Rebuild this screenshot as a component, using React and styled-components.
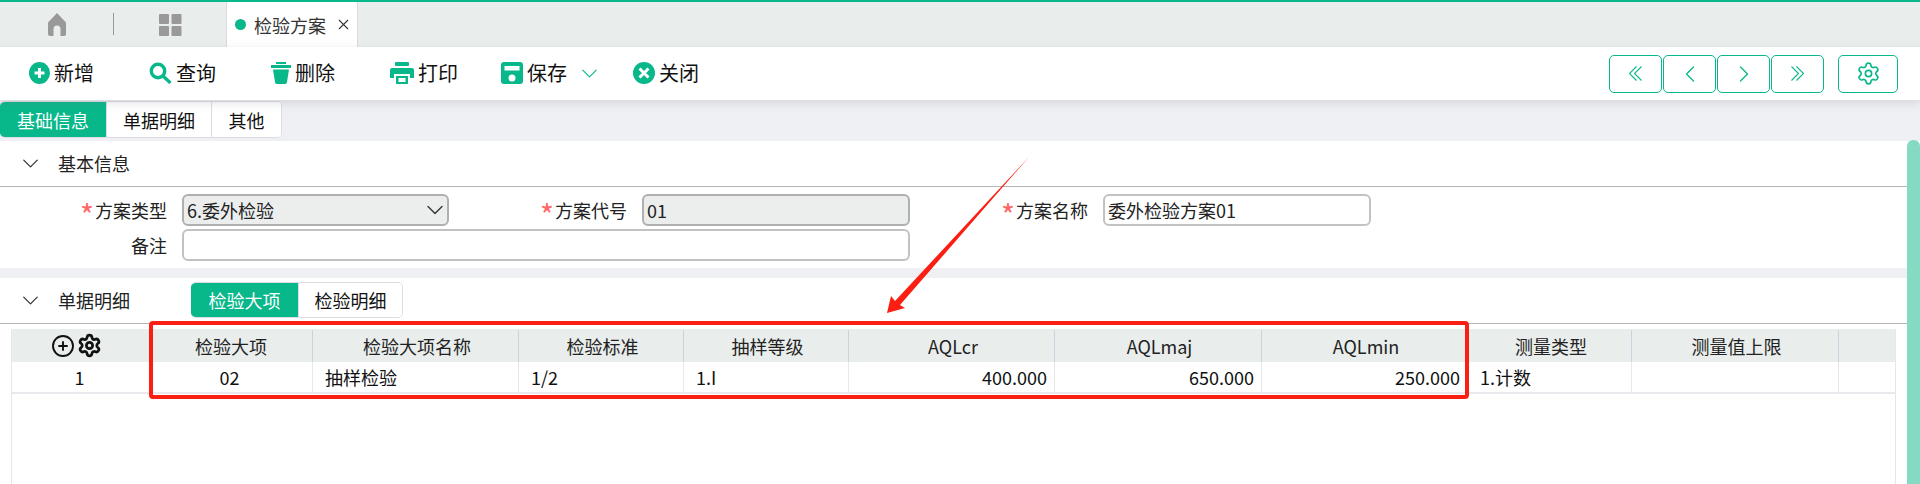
import styled, { createGlobalStyle } from 'styled-components';
import { ChevronDown, ChevronLeft, ChevronRight, CirclePlus, Settings, X } from 'lucide-react';

const GREEN = '#08b78a';
const FONT = '"Noto Sans CJK SC", "Noto Sans", sans-serif';

const GlobalStyle = createGlobalStyle`
  html, body {
    margin: 0;
    padding: 0;
    background: #fff;
  }
  * {
    box-sizing: border-box;
  }
`;

const Page = styled.div`
  position: relative;
  width: 1920px;
  height: 484px;
  overflow: hidden;
  background: #fff;
  color: #111;
  font-family: ${FONT};
  font-size: 18px;
`;

const TabBar = styled.div`
  display: flex;
  align-items: stretch;
  height: 47px;
  border-top: 2px solid ${GREEN};
  background: #e9edec;
`;

const TabIcon = styled.div`
  display: flex;
  align-items: center;
  justify-content: center;
  width: ${p => p.$w}px;
  color: #999;
`;

const TabDivider = styled.div`
  width: 1px;
  height: 22px;
  margin-top: 11px;
  background: #9a9a9a;
`;

const PageTab = styled.div`
  display: flex;
  align-items: center;
  width: 132px;
  padding-left: 8px;
  background: #fff;
  border: solid #d9dcdc;
  border-width: 0 1px;
  border-radius: 3px 3px 0 0;
  color: #333;
`;

const Dot = styled.span`
  width: 11px;
  height: 11px;
  margin-right: 8px;
  border-radius: 50%;
  background: ${GREEN};
`;

const TabClose = styled(X)`
  margin-left: 9px;
  color: #333;
`;

const Toolbar = styled.div`
  position: relative;
  display: flex;
  align-items: center;
  height: 53px;
  padding-left: 29px;
  background: #fff;
  box-shadow: 0 3px 9px rgba(120, 122, 135, 0.22);
`;

const ToolButton = styled.div`
  display: flex;
  align-items: center;
  gap: 4px;
  width: ${p => p.$w}px;
  margin-top: -1px;
  color: #111;
  font-size: 20px;
  line-height: 1;
  svg {
    flex: none;
  }
`;

const SaveArrow = styled(ChevronDown)`
  margin-left: 5px;
  color: ${GREEN};
`;

const NavGroup = styled.div`
  display: flex;
  gap: 1px;
  margin-left: auto;
  margin-right: 22px;
`;

const NavButton = styled.div`
  display: flex;
  align-items: center;
  justify-content: center;
  width: ${p => p.$w || 53}px;
  height: 38px;
  margin-right: ${p => p.$mr || 0}px;
  border: 1px solid ${GREEN};
  border-radius: 5px;
  color: ${GREEN};
`;

const TabStrip = styled.div`
  height: 41px;
  padding-top: 1px;
  background: #eff0f4;
`;

const Segments = styled.div`
  display: inline-flex;
  height: ${p => p.$h}px;
  background: #fff;
  border: 1px solid #dcdde3;
  border-left: none;
  border-radius: 5px;
  overflow: hidden;
`;

const DetailTabs = styled(Segments)`
  align-self: flex-start;
  margin-top: 4px;
`;

const Segment = styled.div`
  display: flex;
  align-items: center;
  justify-content: center;
  width: ${p => p.$w}px;
  margin: -1px 0;
  background: ${p => (p.$active ? GREEN : '#fff')};
  color: ${p => (p.$active ? '#fff' : '#111')};
  & + & {
    border-left: 1px solid #dcdde3;
  }
`;

const SectionHead = styled.div`
  display: flex;
  align-items: center;
  height: 46px;
  padding-left: 17px;
  border-bottom: 1px solid #b4b4b4;
  background: #fff;
  color: #222;
`;

const SectionTitle = styled.span`
  margin: -2px 0 0 14px;
  width: ${p => p.$w || 'auto'};
`;

const FormGrid = styled.div`
  display: grid;
  grid-template-columns: 182px 267px 193px 268px 193px 268px;
  grid-auto-rows: 32px;
  row-gap: 3px;
  height: 81px;
  padding-top: 7px;
  background: #fff;
`;

const Label = styled.div`
  display: flex;
  align-items: center;
  justify-content: flex-end;
  padding-right: 15px;
  color: #222;
`;

const Star = styled.span`
  margin-right: 1px;
  color: #f66;
  font-size: 30px;
  line-height: 1;
  height: 22px;
`;

const Control = styled.div`
  display: flex;
  align-items: center;
  justify-content: space-between;
  grid-column: ${p => (p.$wide ? 'span 3' : 'auto')};
  padding: 0 6px 0 3px;
  border: 2px solid ${p => (p.$disabled ? '#b0b0b0' : '#c2c2c2')};
  border-radius: 6px;
  background: ${p => (p.$disabled ? '#eceeed' : '#fff')};
  color: #222;
`;

const SelectArrow = styled(ChevronDown)`
  flex: none;
  margin-right: -8px;
  color: #333;
`;

const Gap = styled.div`
  height: 10px;
  background: #eff0f4;
`;

const TableWrap = styled.div`
  height: 160px;
  margin: 0 24px 0 11px;
  padding-top: 5px;
`;

const Table = styled.div`
  height: 100%;
  border: solid #e6e7eb;
  border-width: 0 1px;
`;

const COLUMNS = '135px 166px 206px 165px 165px 206px 207px 206px 164px 207px 1fr';

const HeadRow = styled.div`
  display: grid;
  grid-template-columns: ${COLUMNS};
  height: 33px;
  background: #e9edec;
`;

const HeadCell = styled.div`
  display: flex;
  align-items: center;
  justify-content: center;
  padding-left: 3px;
  margin: 1px 0 0;
  border-right: 1px solid #ced1de;
  color: #222;
  &:last-child {
    border-right: none;
  }
`;

const HeadTools = styled.div`
  display: flex;
  align-items: center;
  justify-content: center;
  gap: 2px;
  padding-right: 7px;
`;

const BodyRow = styled.div`
  display: grid;
  grid-template-columns: ${COLUMNS};
  height: 32px;
  border-bottom: 2px solid #e8e9ec;
`;

const BodyCell = styled.div`
  display: flex;
  align-items: center;
  justify-content: ${p =>
    p.$align === 'right' ? 'flex-end' : p.$align === 'center' ? 'center' : 'flex-start'};
  padding: ${p =>
    p.$align === 'right' ? '0 7px 0 0' : p.$align === 'center' ? '0' : '0 0 0 12px'};
  border-right: ${p => (p.$plain ? 'none' : '1px solid #e8e9ee')};
  color: #111;
`;

const RedBox = styled.div`
  position: absolute;
  left: 149px;
  top: 321px;
  width: 1320px;
  height: 78px;
  border: 4px solid #fa1e13;
  border-radius: 4px;
`;

const ArrowSvg = styled.svg`
  position: absolute;
  left: 880px;
  top: 150px;
`;

const ScrollThumb = styled.div`
  position: absolute;
  right: 0;
  top: 140px;
  bottom: 0;
  width: 13px;
  border-radius: 6px 6px 0 0;
  background: #84dac3;
`;

const HomeIcon = () => (
  <svg width="22" height="23" viewBox="0 0 22 23" fill="#999">
    <path d="M11 0 20 9.5V21a2 2 0 0 1-2 2h-3.5v-7a3.5 3.5 0 0 0-7 0v7H4a2 2 0 0 1-2-2V9.5z" />
  </svg>
);

const GridIcon = () => (
  <svg width="23" height="22" viewBox="0 0 23 22" fill="#999">
    <rect width="10" height="10" rx="1" />
    <rect x="12.5" width="10" height="10" rx="1" />
    <rect y="12" width="10" height="10" rx="1" />
    <rect x="12.5" y="12" width="10" height="10" rx="1" />
  </svg>
);

const AddIcon = () => (
  <svg width="21" height="22" viewBox="0 0 21 22">
    <ellipse cx="10.5" cy="11" rx="10.5" ry="11" fill={GREEN} />
    <path d="M10.5 6v10M5.5 11h10" stroke="#fff" strokeWidth="3" />
  </svg>
);

const SearchIcon = () => (
  <svg width="23" height="22" viewBox="0 0 23 22" fill="none" stroke={GREEN}>
    <circle cx="9" cy="9" r="6.7" strokeWidth="3.4" />
    <path d="m14 14 7.5 7" strokeWidth="3.2" />
  </svg>
);

const TrashIcon = () => (
  <svg width="20" height="22" viewBox="0 0 20 22" fill={GREEN}>
    <rect x="5" width="10" height="2" />
    <rect y="3" width="20" height="3" />
    <path d="M2 7.5h16L16 20a2 2 0 0 1-2 2H6a2 2 0 0 1-2-2z" />
  </svg>
);

const PrintIcon = () => (
  <svg width="24" height="22" viewBox="0 0 24 22" fill={GREEN}>
    <rect x="5" width="14" height="4" rx="1" />
    <path d="M2 6h20a2 2 0 0 1 2 2v8h-4v-4H4v4H0V8a2 2 0 0 1 2-2z" />
    <rect x="6" y="14" width="12" height="8" />
    <rect x="8.5" y="16" width="7" height="4" fill="#fff" />
  </svg>
);

const SaveIcon = () => (
  <svg width="22" height="22" viewBox="0 0 22 22" fill={GREEN}>
    <rect width="22" height="22" rx="3" />
    <rect x="3.5" y="4" width="15" height="4.5" fill="#fff" />
    <circle cx="11" cy="16" r="3.5" fill="#fff" />
  </svg>
);

const CloseIcon = () => (
  <svg width="22" height="22" viewBox="0 0 22 22">
    <circle cx="11" cy="11" r="11" fill={GREEN} />
    <path d="m6.5 6.5 9 9m0-9-9 9" stroke="#fff" strokeWidth="3" />
  </svg>
);

// lucide's double chevrons are too wide here
const DoubleChevron = ({ flip }) => (
  <svg width="13" height="15" viewBox="0 0 13 15" fill="none" stroke={GREEN} strokeWidth="1.1">
    <path
      d="M7.5.5l-7 7 7 7M12.5.5l-7 7 7 7"
      transform={flip ? 'matrix(-1 0 0 1 13 0)' : undefined}
    />
  </svg>
);

const tools = [
  { label: '新增', icon: <AddIcon />, w: 120 },
  { label: '查询', icon: <SearchIcon />, w: 122 },
  { label: '删除', icon: <TrashIcon />, w: 119 },
  { label: '打印', icon: <PrintIcon />, w: 111 },
  {
    label: '保存',
    icon: <SaveIcon />,
    w: 132,
    extra: <SaveArrow size={27} strokeWidth={1} />,
  },
  { label: '关闭', icon: <CloseIcon />, w: 80 },
];

const headers = ['检验大项', '检验大项名称', '检验标准', '抽样等级', 'AQLcr', 'AQLmaj', 'AQLmin', '测量类型', '测量值上限'];

const App = () => {
  return (
    <Page>
      <GlobalStyle />

      <TabBar>
        <TabIcon $w={113}>
          <HomeIcon />
        </TabIcon>
        <TabDivider />
        <TabIcon $w={112}>
          <GridIcon />
        </TabIcon>
        <PageTab>
          <Dot />
          检验方案
          <TabClose size={17} strokeWidth={1.5} />
        </PageTab>
      </TabBar>

      <Toolbar>
        {tools.map(t => (
          <ToolButton key={t.label} $w={t.w}>
            {t.icon}
            {t.label}
            {t.extra}
          </ToolButton>
        ))}
        <NavGroup>
          <NavButton>
            <DoubleChevron />
          </NavButton>
          <NavButton>
            <ChevronLeft size={28} strokeWidth={1.1} />
          </NavButton>
          <NavButton>
            <ChevronRight size={28} strokeWidth={1.1} />
          </NavButton>
          <NavButton $mr={13}>
            <DoubleChevron flip />
          </NavButton>
          <NavButton $w={60}>
            <Settings size={25} strokeWidth={1.6} />
          </NavButton>
        </NavGroup>
      </Toolbar>

      <TabStrip>
        <Segments $h={37}>
          <Segment $w={106} $active>基础信息</Segment>
          <Segment $w={105}>单据明细</Segment>
          <Segment $w={70}>其他</Segment>
        </Segments>
      </TabStrip>

      <SectionHead>
        <ChevronDown size={27} strokeWidth={1.1} color="#333" />
        <SectionTitle>基本信息</SectionTitle>
      </SectionHead>

      <FormGrid>
        <Label>
          <Star>*</Star>方案类型
        </Label>
        <Control $disabled>
          6.委外检验
          <SelectArrow size={28} strokeWidth={1.2} />
        </Control>
        <Label>
          <Star>*</Star>方案代号
        </Label>
        <Control $disabled>01</Control>
        <Label>
          <Star>*</Star>方案名称
        </Label>
        <Control>委外检验方案01</Control>
        <Label>备注</Label>
        <Control $wide />
      </FormGrid>

      <Gap />

      <SectionHead>
        <ChevronDown size={27} strokeWidth={1.1} color="#333" />
        <SectionTitle $w="133px">单据明细</SectionTitle>
        <DetailTabs $h={36}>
          <Segment $w={107} $active>检验大项</Segment>
          <Segment $w={104}>检验明细</Segment>
        </DetailTabs>
      </SectionHead>

      <TableWrap>
        <Table>
          <HeadRow>
            <HeadTools>
              <CirclePlus size={24} strokeWidth={1.9} color="#111" />
              <Settings size={25} strokeWidth={2.6} color="#111" />
            </HeadTools>
            {headers.map(h => (
              <HeadCell key={h}>{h}</HeadCell>
            ))}
            <HeadCell />
          </HeadRow>
          <BodyRow>
            <BodyCell $align="center" $plain>1</BodyCell>
            <BodyCell $align="center">02</BodyCell>
            <BodyCell>抽样检验</BodyCell>
            <BodyCell>1/2</BodyCell>
            <BodyCell>1.I</BodyCell>
            <BodyCell $align="right">400.000</BodyCell>
            <BodyCell $align="right">650.000</BodyCell>
            <BodyCell $align="right">250.000</BodyCell>
            <BodyCell>1.计数</BodyCell>
            <BodyCell />
            <BodyCell $plain />
          </BodyRow>
        </Table>
      </TableWrap>

      <RedBox />
      <ArrowSvg width="155" height="170" viewBox="880 150 155 170">
        <polygon points="1029,157 900,305 905,308 887,313 891,296 895,301" fill="#fa1e13" />
      </ArrowSvg>
      <ScrollThumb />
    </Page>
  );
};

export default App;
